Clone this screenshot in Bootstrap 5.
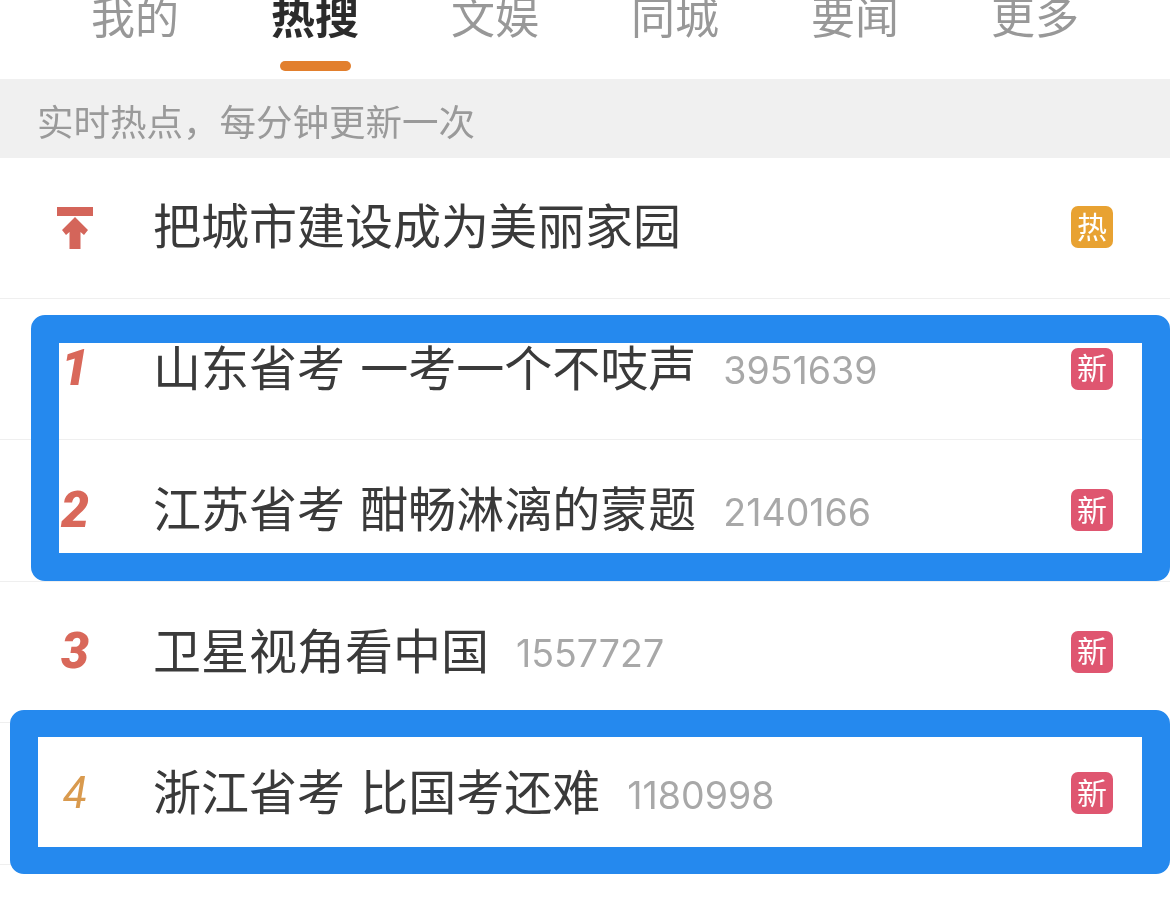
<!DOCTYPE html>
<html lang="zh-CN">
<head>
  <meta charset="UTF-8">
  <title>微博热搜</title>
  <link href="https://cdn.jsdelivr.net/npm/bootstrap@5.3.0/dist/css/bootstrap.min.css" rel="stylesheet">
  <style>
    body {
      background-color: #fff;
      font-family: "Liberation Sans", "Noto Sans CJK SC", sans-serif;
      color: #3a3a3a;
      min-height: 900px;
      overflow: hidden;
      filter: blur(0.5px);
    }

    .tab-bar {
      height: 79px;
      padding: 0 45px;
    }

    .tab-item {
      width: 180px;
      font-size: 44px;
      line-height: 37px;
      color: #989898;
    }

    .tab-item.active-tab {
      color: #2b2b2b;
      font-weight: 700;
    }

    .tab-mark {
      width: 71px;
      height: 10px;
      margin-top: 24px;
      border-radius: 5px;
      background-color: #e27f2d;
    }

    .notice-bar {
      height: 79px;
      padding-left: 37px;
      padding-top: 12px;
      background-color: #f0f0f0;
      font-size: 36.5px;
      color: #9a9a9a;
    }

    .hot-list {
      margin-top: -1px;
    }

    .hot-row {
      height: 141.5px;
      border-bottom: 1px solid #efefef;
    }

    .rank-cell {
      width: 155px;
      padding-right: 5px;
      flex-shrink: 0;
      font-family: Roboto, "Liberation Sans", sans-serif;
      font-size: 50px;
      font-weight: 900;
      font-style: italic;
      color: #d9685a;
    }

    .rank-cell.rank-low {
      font-size: 44px;
      font-weight: 400;
      color: #d99a4e;
    }

    .rank-icon {
      margin-top: 2px;
    }

    .hot-title {
      margin-left: -2px;
      padding-top: 2px;
      font-size: 48px;
      word-spacing: 2px;
      white-space: pre;
    }

    .hot-count {
      margin-left: 27px;
      padding-top: 5px;
      font-family: Inter, "Liberation Sans", sans-serif;
      font-size: 37.5px;
      color: #a8a8a8;
    }

    .hot-tag {
      width: 42px;
      height: 42px;
      margin-left: auto;
      margin-right: 57px;
      border-radius: 7px;
      font-size: 30px;
      color: #fff;
    }

    .tag-hot { background-color: #e8a232; }
    .tag-new { background-color: #df5670; }

    .mark-box {
      position: absolute;
      right: 0;
      border: 28px solid #2589ee;
      border-radius: 14px;
    }

    .mark-one { left: 31px; top: 315px; height: 266px; }
    .mark-two { left: 10px; top: 710px; height: 164px; border-width: 27px 28px; }
  </style>
</head>
<body class="position-relative">
  <div class="tab-bar d-flex">
    <div class="tab-item d-flex flex-column align-items-center">我的</div>
    <div class="tab-item active-tab d-flex flex-column align-items-center">热搜<div class="tab-mark"></div></div>
    <div class="tab-item d-flex flex-column align-items-center">文娱</div>
    <div class="tab-item d-flex flex-column align-items-center">同城</div>
    <div class="tab-item d-flex flex-column align-items-center">要闻</div>
    <div class="tab-item d-flex flex-column align-items-center">更多</div>
  </div>

  <div class="notice-bar d-flex align-items-center">实时热点&#65292;每分钟更新一次</div>

  <div class="hot-list">
    <div class="hot-row d-flex align-items-center">
      <div class="rank-cell d-flex justify-content-center">
        <svg class="rank-icon" width="36" height="42" viewBox="0 0 36 42"><path fill="#d4655a" d="M0 0h36v9H0zM18 10l13 13-4 5-3.500-3v17h-11V25L9 28l-4-5z"/></svg>
      </div>
      <div class="hot-title">把城市建设成为美丽家园</div>
      <div class="hot-tag tag-hot d-flex align-items-center justify-content-center">热</div>
    </div>
    <div class="hot-row d-flex align-items-center">
      <div class="rank-cell text-center">1</div>
      <div class="hot-title">山东省考 一考一个不吱声</div>
      <div class="hot-count">3951639</div>
      <div class="hot-tag tag-new d-flex align-items-center justify-content-center">新</div>
    </div>
    <div class="hot-row d-flex align-items-center">
      <div class="rank-cell text-center">2</div>
      <div class="hot-title">江苏省考 酣畅淋漓的蒙题</div>
      <div class="hot-count">2140166</div>
      <div class="hot-tag tag-new d-flex align-items-center justify-content-center">新</div>
    </div>
    <div class="hot-row d-flex align-items-center">
      <div class="rank-cell text-center">3</div>
      <div class="hot-title">卫星视角看中国</div>
      <div class="hot-count">1557727</div>
      <div class="hot-tag tag-new d-flex align-items-center justify-content-center">新</div>
    </div>
    <div class="hot-row d-flex align-items-center">
      <div class="rank-cell rank-low text-center">4</div>
      <div class="hot-title">浙江省考 比国考还难</div>
      <div class="hot-count">1180998</div>
      <div class="hot-tag tag-new d-flex align-items-center justify-content-center">新</div>
    </div>
  </div>

  <div class="mark-box mark-one"></div>
  <div class="mark-box mark-two"></div>

  <script src="https://cdn.jsdelivr.net/npm/bootstrap@5.3.0/dist/js/bootstrap.bundle.min.js"></script>
</body>
</html>
